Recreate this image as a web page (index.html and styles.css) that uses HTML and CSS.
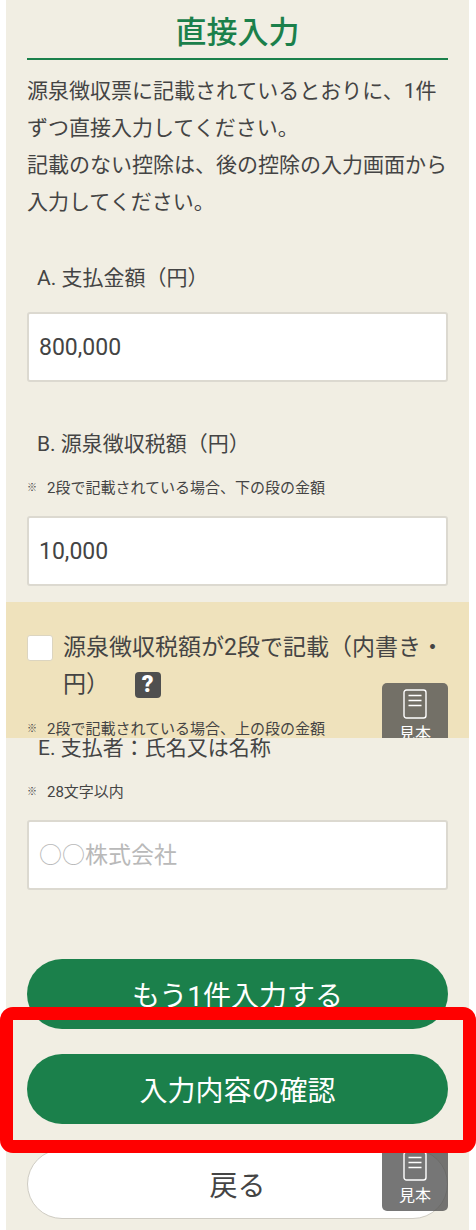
FILE: index.html
```html
<!DOCTYPE html>
<html lang="ja">
  <head>
    <meta charset="utf-8">
    <meta name="viewport" content="width=device-width, initial-scale=1">
    <title>直接入力</title>
    <link rel="stylesheet" href="styles.css">
  </head>
  <body>
    <main class="page">
      <h1 class="title">直接入力</h1>
      <p class="lead">源泉徴収票に記載されているとおりに、1件ずつ直接入力してください。<br>記載のない控除は、後の控除の入力画面から入力してください。</p>

      <form>
        <div class="field">
          <label class="label" for="payment">A. 支払金額（円）</label>
          <input class="textbox" type="text" id="payment" value="800,000">
        </div>

        <div class="field">
          <label class="label" for="tax">B. 源泉徴収税額（円）</label>
          <p class="note"><span class="mark">※</span>2段で記載されている場合、下の段の金額</p>
          <input class="textbox" type="text" id="tax" value="10,000">
        </div>

        <!-- Two-row entry option -->
        <div class="option">
          <div class="option-row">
            <input class="check" type="checkbox" id="tworows">
            <div class="option-text">
              <label for="tworows">源泉徴収税額が2段で記載（内書き・円）</label>
              <button class="help" type="button">?</button>
            </div>
          </div>
          <p class="note"><span class="mark">※</span>2段で記載されている場合、上の段の金額</p>
          <button class="sample sample-option" type="button">
            <svg width="24" height="30" viewBox="0 0 24 30" fill="none" stroke="currentColor" stroke-width="1.4">
              <rect x="1" y="1" width="22" height="28" rx="2.5"/>
              <path d="M5.5 6.5h13M5.5 11.5h13M5.5 16.5h13"/>
            </svg>
            見本
          </button>
        </div>

        <div class="field field-payer">
          <label class="label" for="payer">E. 支払者：氏名又は名称</label>
          <p class="note"><span class="mark">※</span>28文字以内</p>
          <input class="textbox" type="text" id="payer" placeholder="○○株式会社">
        </div>

        <div class="actions">
          <button class="btn" type="button">もう1件入力する</button>
          <div class="confirm">
            <button class="btn" type="submit">入力内容の確認</button>
            <div class="frame"></div>
          </div>
          <div class="back">
            <button class="btn btn-back" type="button">戻る</button>
            <button class="sample sample-back" type="button">
              <svg width="24" height="30" viewBox="0 0 24 30" fill="none" stroke="currentColor" stroke-width="1.4">
                <rect x="1" y="1" width="22" height="28" rx="2.5"/>
                <path d="M5.5 6.5h13M5.5 11.5h13M5.5 16.5h13"/>
              </svg>
              見本
            </button>
          </div>
        </div>
      </form>
    </main>
  </body>
</html>
```
FILE: styles.css
```css
* {
  box-sizing: border-box;
}

body {
  margin: 0;
  background-color: white;
  color: #444;
  font-family: Roboto, "Noto Sans CJK JP", sans-serif;
  font-size: 21px;
}

button, input {
  font-family: inherit;
  color: inherit;
}

.page {
  margin: 0 7px 0 6px;
  padding: 11px 21px;
  background-color: #f1eee3;
}

.title {
  margin: 0;
  padding-bottom: 3px;
  border-bottom: 2px solid #1b804b;
  color: #1b804b;
  font-size: 31px;
  font-weight: 500;
  line-height: 44px;
  text-align: center;
}

.lead {
  margin: 13px 0 47px;
  line-height: 37px;
}

.field {
  margin-bottom: 52px;
}

.label {
  display: block;
  padding-left: 10px;
  line-height: 20px;
}

.note {
  display: flex;
  margin: 25px 0 0;
  font-size: 15px;
  line-height: 18px;
}

.mark {
  width: 20px;
  font-size: 10px;
  font-weight: 700;
}

.textbox {
  display: block;
  width: 100%;
  height: 70px;
  margin-top: 24px;
  padding: 0 10px;
  border: 2px solid #dcd9d0;
  border-radius: 3px;
  background-color: white;
  font-size: 23px;
}

.note + .textbox {
  margin-top: 19px;
}

.textbox::placeholder {
  color: #b9b9b9;
}

/* Tan panel, runs the full width of the page */
.option {
  position: relative;
  overflow: hidden;
  margin: -36px -21px 0;
  padding: 27px 21px 0;
  background-color: #efe2bc;
}

.option .note {
  margin-top: 17px;
}

.option-row {
  display: flex;
  gap: 10px;
  font-size: 23px;
  line-height: 37px;
}

.check {
  appearance: none;
  flex: none;
  width: 26px;
  height: 26px;
  margin: 6px 0 0;
  border: 1px solid #dcd5c0;
  border-radius: 3px;
  background-color: white;
}

.check:checked {
  background-color: #1b804b;
}

.help {
  width: 26px;
  height: 26px;
  margin-left: 20px;
  padding: 0;
  border: 0;
  border-radius: 4px;
  background-color: #4f4f4f;
  color: white;
  font-size: 23px;
  font-weight: 900;
  line-height: 26px;
}

.sample {
  position: absolute;
  display: flex;
  flex-direction: column;
  align-items: center;
  gap: 5px;
  width: 66px;
  height: 66px;
  padding: 6px 0 0;
  border: 0;
  border-radius: 5px;
  background-color: rgba(80, 80, 80, 0.78);
  color: white;
  font-size: 16px;
  line-height: 20px;
}

.sample-option {
  right: 21px;
  bottom: -11px;
}

.sample-back {
  right: 0;
  bottom: 8px;
}

.field-payer {
  margin-bottom: 0;
}

.field-payer .label {
  padding-left: 11px;
}

.actions {
  display: flex;
  flex-direction: column;
  gap: 25px;
  margin-top: 69px;
}

.btn {
  display: block;
  width: 100%;
  height: 70px;
  border: 0;
  border-radius: 35px;
  background-color: #1b804b;
  color: white;
  font-size: 28px;
}

.btn-back {
  border: 1px solid #cfccc3;
  background-color: white;
  color: #444;
}

.confirm, .back {
  position: relative;
}

.confirm {
  z-index: 1;
}

/* Red highlight over the confirm button */
.frame {
  position: absolute;
  top: -47px;
  right: -28px;
  bottom: -29px;
  left: -27px;
  border: 13px solid red;
  border-radius: 13px;
  pointer-events: none;
}
```
